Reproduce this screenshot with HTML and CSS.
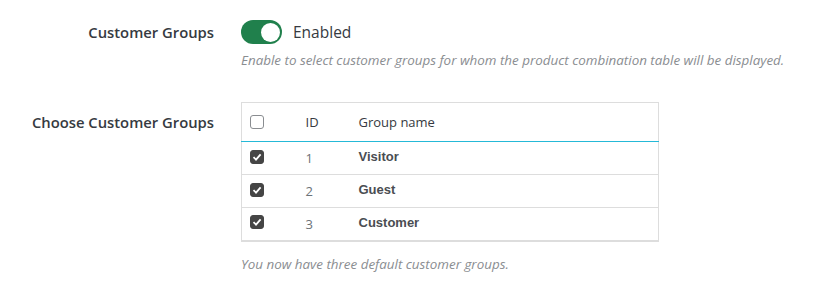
FILE: index.html
```html
<!DOCTYPE html>
<html>
<head>
    <meta charset="UTF-8">
    <title>Customer Groups</title>
    <link rel="stylesheet" href="styles.css">
</head>
<body>
    <div class="form">
        <div class="form-row">
            <label class="form-label">Customer Groups</label>
            <div class="form-field">
                <div class="switch-line">
                    <span class="switch"><span class="knob"></span></span>
                    <span class="switch-text">Enabled</span>
                </div>
                <p class="help">Enable to select customer groups for whom the product combination table will be displayed.</p>
            </div>
        </div>

        <div class="form-row groups-row">
            <label class="form-label">Choose Customer Groups</label>
            <div class="form-field">
                <table class="groups">
                    <thead>
                        <tr>
                            <th class="col-check"><span class="box"></span></th>
                            <th class="col-id">ID</th>
                            <th>Group name</th>
                        </tr>
                    </thead>
                    <tbody id="group-rows"></tbody>
                </table>
                <p class="help foot">You now have three default customer groups.</p>
            </div>
        </div>
    </div>

    <script>
        const groups = [
            { id: 1, name: 'Visitor' },
            { id: 2, name: 'Guest' },
            { id: 3, name: 'Customer' }
        ];

        const rows = document.getElementById('group-rows');
        groups.forEach(group => {
            const tr = document.createElement('tr');
            tr.innerHTML = `
                <td class="col-check">
                    <span class="box checked">
                        <svg width="10" height="10" viewBox="0 0 10 10"><path d="M1.5 5.2 L4 7.6 L8.6 2.4" fill="none" stroke="#fff" stroke-width="1.8"/></svg>
                    </span>
                </td>
                <td class="col-id">${group.id}</td>
                <td class="name">${group.name}</td>
            `;
            rows.appendChild(tr);
        });
    </script>
</body>
</html>
```

FILE: styles.css
```css
* {
    margin: 0;
    padding: 0;
    box-sizing: border-box;
}

body {
    background: #fff;
    font-family: 'Open Sans', sans-serif;
    color: #363a41;
}

.form {
    padding-top: 20px;
}

.form-row {
    display: flex;
    align-items: flex-start;
}

.groups-row {
    margin-top: 33px;
}

.form-label {
    width: 214px;
    text-align: right;
    font-size: 14.8px;
    line-height: 20px;
    font-weight: 600;
    color: #363a41;
    padding-top: 2px;
}

.groups-row .form-label {
    padding-top: 10px;
}

.form-field {
    margin-left: 27px;
    width: 580px;
}

.switch-line {
    display: flex;
    align-items: center;
    height: 24px;
}

.switch {
    display: inline-block;
    position: relative;
    width: 41px;
    height: 24px;
    border-radius: 12px;
    background: #20804c;
}

.knob {
    position: absolute;
    top: 3px;
    right: 2px;
    width: 19px;
    height: 19px;
    border-radius: 50%;
    background: #fff;
}

.switch-text {
    margin-left: 11px;
    font-size: 15.5px;
    color: #363a41;
}

.help {
    margin-top: 7px;
    font-size: 13.4px;
    line-height: 18px;
    font-style: italic;
    color: #8a8d91;
    white-space: nowrap;
}

.help.foot {
    margin-top: 13px;
}

.groups {
    width: 418px;
    border-collapse: collapse;
    border: 1px solid #dddddd;
    border-bottom-width: 2px;
    font-size: 13px;
}

.groups th {
    height: 39px;
    text-align: left;
    font-weight: 400;
    color: #363a41;
    border-bottom: 1px solid #25b9d7;
}

.groups td {
    height: 33px;
    padding-bottom: 3px;
    border-top: 1px solid #dddddd;
}

.groups tbody tr:first-child td {
    border-top: 1px solid #25b9d7;
}

.col-check {
    width: 64px;
    padding-left: 8px;
}

.col-id {
    width: 53px;
    color: #6c7378;
}

.groups td.col-id {
    padding-top: 3px;
}

.groups th.col-id {
    color: #363a41;
}

.name {
    font-family: 'Liberation Sans', sans-serif;
    font-weight: 700;
    color: #4a4d52;
}

.box {
    display: flex;
    align-items: center;
    justify-content: center;
    width: 14px;
    height: 14px;
    border: 1px solid #8a8d91;
    border-radius: 3px;
    background: #fff;
}

.box.checked {
    background: #454545;
    border-color: #454545;
}
```
